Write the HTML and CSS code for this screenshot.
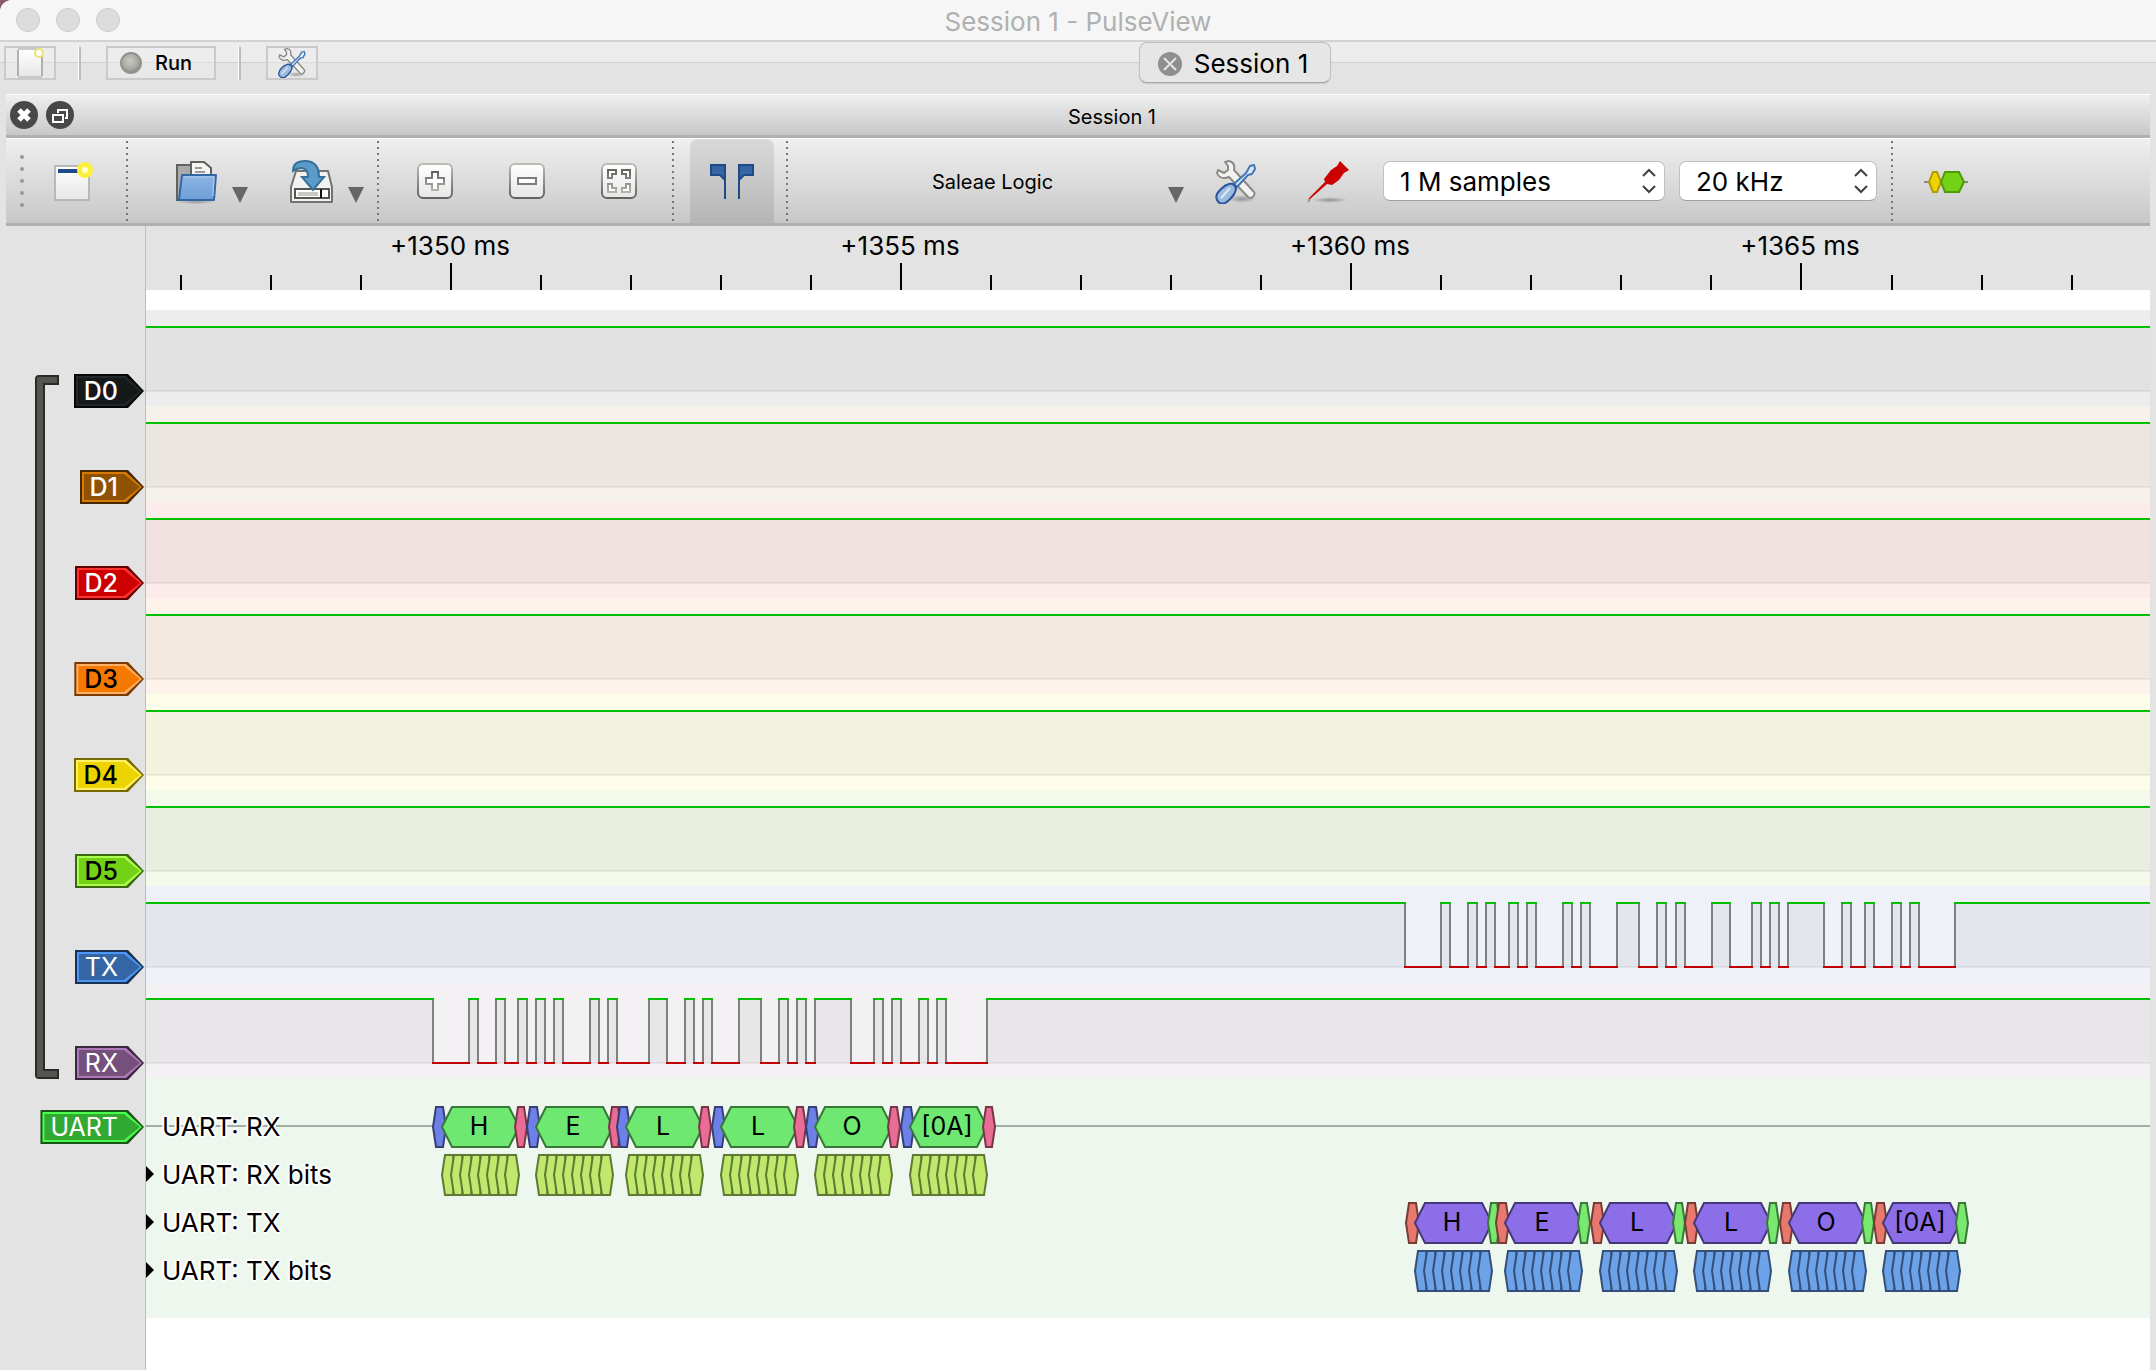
FILE: index.html
```html
<!DOCTYPE html>
<html lang="en">
<head>
	<meta charset="UTF-8">
	<title>Session 1 - PulseView</title>
	<link rel="stylesheet" href="styles.css">
</head>
<body>
	<svg class="defs" width="0" height="0" aria-hidden="true">
		<defs>
			<linearGradient id="paper" x1="0" y1="0" x2="0" y2="1"><stop offset="0" stop-color="#fff"/><stop offset="1" stop-color="#e6e6e6"/></linearGradient>
			<linearGradient id="folder" x1="0" y1="0" x2="0" y2="1"><stop offset="0" stop-color="#8db4e2"/><stop offset="1" stop-color="#6d9fd8"/></linearGradient>
			<linearGradient id="edge" x1="0" y1="0" x2="0" y2="1"><stop offset="0" stop-color="#bdbdb6"/><stop offset="1" stop-color="#63635e"/></linearGradient>
			<linearGradient id="glyph" x1="0" y1="0" x2="0" y2="1"><stop offset="0" stop-color="#62625e"/><stop offset="1" stop-color="#b4b4ae"/></linearGradient>
			<radialGradient id="bulb" cx=".45" cy=".4" r=".6"><stop offset="0" stop-color="#c8cbc2"/><stop offset=".7" stop-color="#a5a8a0"/><stop offset="1" stop-color="#7f827a"/></radialGradient>
			<radialGradient id="shade"><stop offset="0" stop-opacity=".3"/><stop offset="1" stop-opacity="0"/></radialGradient>
			<symbol id="tools" viewBox="0 0 44 44">
				<ellipse cx="28" cy="39" rx="14" ry="4" fill="url(#shade)"/>
				<path d="M11 2l4-1c4 1 6 4 5 9l20 22c2 3-3 8-6 5L15 17c-5 2-10 1-12-4l1-3 6 3 4-3 0-4z" fill="#f2f2f0" stroke="#8b8b86" stroke-width="2" stroke-linejoin="round"/>
				<path d="M36 6l4-1 1 4-3 5-4 1-11 12-3-3 12-11z" fill="#dce8f6" stroke="#4276b6" stroke-width="2" stroke-linejoin="round"/>
				<path d="M15 24q6-1 7 5-1 6-8 12c-4 4-9 3-11-1-2-5 1-8 4-11q4-4 8-5z" fill="#9dbbdd" stroke="#2a559a" stroke-width="2"/>
				<path d="M16 28L7 38" stroke="#dde9f5" stroke-width="2"/>
			</symbol>
			<symbol id="arrow" viewBox="0 0 16 16"><path d="M0 0h16L8 16z" fill="#666"/></symbol>
		</defs>
	</svg>

	<div class="window">
		<div class="titlebar">
			<div class="lights">
				<span class="light"></span>
				<span class="light"></span>
				<span class="light"></span>
			</div>
			<h1 class="window-title">Session 1 - PulseView</h1>
		</div>

		<div class="mainbar">
			<div class="main-tools">
				<button class="small-btn" aria-label="New session">
					<svg width="28" height="30" viewBox="0 0 28 30">
						<path d="M2 2h24v27H2z" fill="url(#paper)"/>
						<path d="M2 2v26M26 3v25" stroke="#b0b0ac" stroke-width="2"/>
						<path d="M2 1h20M2 29h24" stroke="#c8c8c4" stroke-width="2"/>
						<circle cx="23" cy="5" r="4" fill="#fff" stroke="#eee276" stroke-width="2"/>
					</svg>
				</button>
				<span class="small-sep"></span>
				<button class="small-btn run">
					<svg width="24" height="24" viewBox="0 0 24 24"><circle cx="12" cy="12" r="10" fill="url(#bulb)" stroke="#90938b" stroke-width="2"/></svg>
					Run
				</button>
				<span class="small-sep"></span>
				<button class="small-btn" aria-label="Settings"><svg width="30" height="30"><use href="#tools"/></svg></button>
			</div>
			<div class="tabs">
				<button class="tab">
					<svg width="24" height="24" viewBox="0 0 24 24"><circle cx="12" cy="12" r="12" fill="#8f8f8f"/><path d="M6 6l12 12M18 6L6 18" stroke="#e4e4e4" stroke-width="2"/></svg>
					Session 1
				</button>
			</div>
		</div>

		<div class="dock">
			<div class="dock-title">
				<div class="dock-buttons">
					<button class="dock-btn" aria-label="Close"><svg width="28" height="28" viewBox="0 0 28 28"><circle cx="14" cy="14" r="14" fill="#484848"/><path d="M9 9l10 10M19 9L9 19" stroke="#fff" stroke-width="5"/></svg></button>
					<button class="dock-btn" aria-label="Float"><svg width="28" height="28" viewBox="0 0 28 28"><circle cx="14" cy="14" r="14" fill="#484848"/><path d="M7 14h10v7H7zM12 12V9h9v8h-2" fill="none" stroke="#fff" stroke-width="2"/></svg></button>
				</div>
				<h2 class="dock-name">Session 1</h2>
			</div>

			<div class="toolbar">
				<div class="handle"><i></i><i></i><i></i><i></i><i></i></div>
				<button class="tool" aria-label="New view">
					<svg width="44" height="44" viewBox="0 0 44 44">
						<path d="M4 6h34v34H4z" fill="url(#paper)" stroke="#b9b9b3" stroke-width="2"/>
						<path d="M7 9h22v4H7z" fill="#204a87"/>
						<circle cx="34" cy="10" r="8" fill="#fcf03c"/>
						<circle cx="34" cy="10" r="3" fill="#fffdd8"/>
					</svg>
				</button>
				<span class="sep"></span>
				<button class="split" aria-label="Open">
					<svg width="44" height="44" viewBox="0 0 44 44">
						<ellipse cx="22" cy="42" rx="20" ry="2" fill="url(#shade)"/>
						<path d="M3 40V5h15v35z" fill="#aaa" stroke="#61615d" stroke-width="2"/>
						<path d="M17 24V2h13l7 6v16z" fill="#f4f4f2" stroke="#61615d" stroke-width="2"/>
						<path d="M21 8h7M21 12h10" stroke="#9a9a96" stroke-width="2"/>
						<path d="M8 15h34l-2 25H5z" fill="url(#folder)" stroke="#3465a4" stroke-width="2" stroke-linejoin="round"/>
						<path d="M10 17h30l-1 19" fill="none" stroke="#b6d0ee"/>
					</svg>
					<svg class="arrow" width="16" height="16"><use href="#arrow"/></svg>
				</button>
				<button class="split" aria-label="Save">
					<svg width="44" height="44" viewBox="0 0 44 44">
						<path d="M6 11h32l4 16v15H1V27z" fill="#f1f1ef" stroke="#73736e" stroke-width="2" stroke-linejoin="round"/>
						<path d="M5 29h34v9H5z" fill="#fff" stroke="#555" stroke-width="2"/>
						<path d="M8 32h20v4H8z" fill="#c8c8c4"/>
						<path d="M31 29v9" stroke="#111" stroke-width="2"/>
						<path d="M3 11C3 4 8 1 15 1c9 0 14 5 14 16h5L23 30 12 17h6c0-7-3-9-7-9-3 0-5 1-8 3z" fill="#5c9ac8" stroke="#356f9c" stroke-width="2"/>
					</svg>
					<svg class="arrow" width="16" height="16"><use href="#arrow"/></svg>
				</button>
				<span class="sep wide"></span>
				<button class="tool" aria-label="Zoom in">
					<svg width="38" height="40" viewBox="0 0 38 40">
						<rect x="2" y="2" width="34" height="34" rx="5" fill="url(#paper)" stroke="url(#edge)" stroke-width="2"/>
						<path d="M16 10h6v6h6v6h-6v6h-6v-6h-6v-6h6z" fill="#fff" stroke="url(#glyph)" stroke-width="2"/>
					</svg>
				</button>
				<button class="tool" aria-label="Zoom out">
					<svg width="38" height="40" viewBox="0 0 38 40">
						<rect x="2" y="2" width="34" height="34" rx="5" fill="url(#paper)" stroke="url(#edge)" stroke-width="2"/>
						<path d="M10 16h18v6H10z" fill="#fff" stroke="#7d7d78" stroke-width="2"/>
					</svg>
				</button>
				<button class="tool" aria-label="Zoom to fit">
					<svg width="38" height="40" viewBox="0 0 38 40">
						<rect x="2" y="2" width="34" height="34" rx="5" fill="url(#paper)" stroke="url(#edge)" stroke-width="2"/>
						<path d="M8 8h8v4h-4v4H8zM30 8h-8v4h4v4h4zM8 30h8v-4h-4v-4H8zM30 30h-8v-4h4v-4h4z" fill="#fff" stroke="url(#glyph)" stroke-width="2"/>
					</svg>
				</button>
				<span class="sep"></span>
				<button class="tool pressed" aria-label="Show cursors" aria-pressed="true">
					<svg width="44" height="36" viewBox="0 0 44 36">
						<path d="M1 1h14v34V16l-5-5H1zM43 1H29v34V16l5-5h9z" fill="#3465a4" stroke="#204a87" stroke-width="2"/>
					</svg>
				</button>
				<span class="sep"></span>
				<button class="device">
					<span class="device-name">Saleae Logic</span>
					<svg class="arrow" width="16" height="16"><use href="#arrow"/></svg>
				</button>
				<button class="tool" aria-label="Configure device"><svg width="44" height="44"><use href="#tools"/></svg></button>
				<button class="tool" aria-label="Configure channels">
					<svg width="44" height="44" viewBox="0 0 44 44">
						<ellipse cx="24" cy="40" rx="18" ry="3" fill="url(#shade)"/>
						<path d="M2 42l1-4 16-16-1-3 7-9 6-4 3-5 9 9-5 3-5 7-7 5-5-1L4 39z" fill="#c00"/>
						<path d="M2 42l2-3" stroke="#999" stroke-width="2"/>
					</svg>
				</button>
				<div class="combos">
					<label class="combo samples">
						<select aria-label="Sample count"><option>1 M samples</option></select>
						<svg width="16" height="26" viewBox="0 0 16 26"><path d="M2 8l6-6 6 6M2 18l6 6 6-6" fill="none" stroke="#404040" stroke-width="2"/></svg>
					</label>
					<label class="combo rate">
						<select aria-label="Sample rate"><option>20 kHz</option></select>
						<svg width="16" height="26" viewBox="0 0 16 26"><path d="M2 8l6-6 6 6M2 18l6 6 6-6" fill="none" stroke="#404040" stroke-width="2"/></svg>
					</label>
				</div>
				<span class="sep"></span>
				<button class="tool" aria-label="Add decoder">
					<svg width="44" height="24" viewBox="0 0 44 24">
						<path d="M0 12h44" stroke="#888" stroke-width="2"/>
						<path d="M5 12L9 2h4l4 10-4 10H9z" fill="#edd400" stroke="#b39a00" stroke-width="2"/>
						<path d="M17 12l4-10h14l5 10-5 10H21z" fill="#73d216" stroke="#4e9a06" stroke-width="2"/>
					</svg>
				</button>
			</div>

			<div class="view">
				<div class="headers">
					<div class="group">
						<div class="bracket"><div class="bracket-fill"><div class="bracket-edge"></div></div></div>
						<div class="tags">
							<div class="tag-row"><span class="tag d0">D0</span></div>
							<div class="tag-row"><span class="tag d1">D1</span></div>
							<div class="tag-row"><span class="tag d2">D2</span></div>
							<div class="tag-row"><span class="tag d3">D3</span></div>
							<div class="tag-row"><span class="tag d4">D4</span></div>
							<div class="tag-row"><span class="tag d5">D5</span></div>
							<div class="tag-row"><span class="tag tx">TX</span></div>
							<div class="tag-row"><span class="tag rx">RX</span></div>
						</div>
					</div>
					<div class="tag-row decoder-tag"><span class="tag uart">UART</span></div>
				</div>
				<div class="traces">
					<svg class="ruler" id="ruler"></svg>
					<div class="signals">
						<svg class="signal d0-bg" data-name="D0"></svg>
						<svg class="signal d1-bg" data-name="D1"></svg>
						<svg class="signal d2-bg" data-name="D2"></svg>
						<svg class="signal d3-bg" data-name="D3"></svg>
						<svg class="signal d4-bg" data-name="D4"></svg>
						<svg class="signal d5-bg" data-name="D5"></svg>
						<svg class="signal tx-bg" data-name="TX"></svg>
						<svg class="signal rx-bg" data-name="RX"></svg>
					</div>
					<div class="decoder">
						<div class="ann-row first"><svg class="anns" id="rxData"></svg><span class="ann-label">UART: RX</span></div>
						<div class="ann-row"><svg class="anns" id="rxBits"></svg><span class="ann-label">UART: RX bits</span></div>
						<div class="ann-row"><svg class="anns" id="txData"></svg><span class="ann-label">UART: TX</span></div>
						<div class="ann-row"><svg class="anns" id="txBits"></svg><span class="ann-label">UART: TX bits</span></div>
					</div>
				</div>
			</div>
		</div>
	</div>
	<script src="script.js"></script>
</body>
</html>
```
FILE: styles.css
```css
* {
	box-sizing: border-box;
}
html {
	background: #8a5a6c;
}
body {
	margin: 0;
	font-family: Inter, "Liberation Sans", sans-serif;
	font-size: 26px;
	color: #000;
}
h1,
h2 {
	margin: 0;
	font-weight: 400;
}
button {
	margin: 0;
	padding: 0;
	border: 0;
	background: none;
	font: inherit;
	color: inherit;
}
svg {
	display: block;
	flex: none;
}
.defs {
	position: absolute;
}
.window {
	display: flex;
	flex-direction: column;
	min-height: 100vh;
	border-radius: 12px 0 0 0;
	background: #e3e3e3;
	overflow: hidden;
}

/* title bar */
.titlebar {
	display: grid;
	grid-template-columns: 1fr auto 1fr;
	align-items: center;
	height: 42px;
	padding-left: 16px;
	padding-right: 16px;
	border-bottom: 2px solid #d2d2d2;
	background: #f6f6f6;
}
.lights {
	display: flex;
	gap: 16px;
}
.light {
	width: 24px;
	height: 24px;
	border: 1px solid #c9c9c9;
	border-radius: 50%;
	background: #dcdcdc;
}
.window-title {
	padding-top: 2px;
	font-size: 26px;
	color: #b0b0b0;
}

/* main bar with the session tabs */
.mainbar {
	display: flex;
	height: 52px;
	padding-left: 4px;
	padding-right: 4px;
	background: linear-gradient(#ececec 20px, #d0d0d0 20px, #d0d0d0 21px, #e3e3e3 21px);
}
.main-tools {
	display: flex;
	align-items: center;
	height: 34px;
	margin-top: 4px;
}
.small-btn {
	display: flex;
	align-items: center;
	justify-content: center;
	width: 52px;
	height: 34px;
	border: 2px solid #cacaca;
	background: rgba(240, 240, 240, .4);
}
.small-btn.run {
	justify-content: flex-start;
	gap: 12px;
	width: 110px;
	padding-left: 11px;
	font-size: 20px;
	font-weight: 500;
}
.small-sep {
	width: 3px;
	height: 33px;
	margin: 0 25px 0 22px;
	border-left: 1px solid #fff;
	border-right: 2px solid #bcbcbc;
}
.tabs {
	display: flex;
	flex: 1;
	justify-content: center;
	align-items: flex-start;
}
.tab {
	display: flex;
	align-items: center;
	gap: 12px;
	height: 41px;
	padding: 2px 22px 0 18px;
	border: 1px solid #c0c0c0;
	border-bottom-color: #a8a8a8;
	border-radius: 8px;
	background: #e6e6e6;
	box-shadow: 0 1px 1px rgba(0, 0, 0, .12);
}

/* dock */
.dock {
	display: flex;
	flex-direction: column;
	flex: 1;
	margin: 0 6px;
}
.dock-title {
	display: flex;
	align-items: center;
	height: 44px;
	border-top: 1px solid #fff;
	border-bottom: 3px solid #b0b0b0;
	background: linear-gradient(#efefef, #c8c8c8);
}
.dock-buttons {
	display: flex;
	gap: 8px;
	padding-left: 4px;
}
.dock-name {
	flex: 1;
	padding-top: 4px;
	font-size: 20px;
	text-align: center;
}
.toolbar {
	display: flex;
	align-items: center;
	height: 88px;
	border-top: 1px solid #fff;
	border-bottom: 3px solid #b0b0b0;
	background: linear-gradient(#efefef, #c8c8c8);
}
.handle {
	display: flex;
	flex-direction: column;
	align-items: flex-end;
	gap: 8px;
	width: 21px;
	padding-right: 3px;
}
.handle i {
	width: 4px;
	height: 4px;
	border-radius: 50%;
	background: #999;
}
.tool {
	display: flex;
	align-items: center;
	justify-content: center;
	width: 92px;
	height: 84px;
	padding-top: 2px;
}
.tool.pressed {
	width: 84px;
	margin: 0 5px 0 9px;
	border-radius: 8px 8px 0 0;
	background: rgba(0, 0, 0, .09);
}
.sep {
	width: 16px;
	height: 80px;
	background: repeating-linear-gradient(#777 0, #777 2px, transparent 2px, transparent 6px) center / 2px 100% no-repeat;
}
.sep.wide {
	width: 22px;
}
.split {
	display: flex;
	align-items: center;
	gap: 14px;
	height: 84px;
	padding: 2px 3px 0 39px;
}
.arrow {
	margin-top: 26px;
}
.device {
	display: flex;
	align-items: center;
	width: 395px;
	height: 84px;
	padding: 2px 6px 0 22px;
	font-size: 20px;
}
.device-name {
	flex: 1;
}
.combos {
	display: flex;
	gap: 14px;
	padding: 0 7px 0 9px;
}
.combo {
	position: relative;
	display: block;
}
.combo.samples {
	width: 282px;
}
.combo.rate {
	width: 198px;
}
.combo select {
	display: block;
	width: 100%;
	height: 40px;
	padding: 0 16px;
	border: 1px solid #c0c0c0;
	border-bottom-color: #a0a0a0;
	border-radius: 7px;
	background: #fff;
	appearance: none;
	font: inherit;
	color: #000;
}
.combo svg {
	position: absolute;
	top: 7px;
	right: 8px;
	pointer-events: none;
}

/* channel tags */
.view {
	display: flex;
	flex: 1;
}
.headers {
	width: 140px;
	padding: 117px 1px 0 0;
	border-right: 1px solid #bebebe;
}
.group {
	display: flex;
	justify-content: space-between;
	padding-left: 29px;
}
.tags {
	flex: 1;
}
.tag-row {
	display: flex;
	align-items: center;
	justify-content: flex-end;
	height: 96px;
}
.decoder-tag {
	height: 32px;
}
.bracket {
	width: 24px;
	margin: 32px 0;
	border: 2px solid #2a2b28;
	border-right: 0;
	border-radius: 4px 0 0 4px;
	background: #2a2b28;
}
.bracket-fill {
	height: 100%;
	margin-right: 2px;
	padding: 6px 0 6px 6px;
	background: #555650;
}
.bracket-edge {
	height: 100%;
	margin-right: -2px;
	border: 2px solid #2a2b28;
	border-right: 0;
	background: #e3e3e3;
}
.tag {
	position: relative;
	isolation: isolate;
	height: 34px;
	padding: 0 26px 0 10px;
	background: var(--edge);
	font-size: 25px;
	line-height: 35px;
	color: #fff;
	font-weight: 500;
}
.tag,
.tag::before,
.tag::after {
	clip-path: polygon(0 0, calc(100% - 16px) 0, 100% 50%, calc(100% - 16px) 100%, 0 100%);
}
.tag::before,
.tag::after {
	content: '';
	position: absolute;
	z-index: -1;
	inset: 2px;
	background: var(--light);
}
.tag::after {
	inset: 4px;
	background: var(--fill);
}
.d0 { --fill: #16191a; --light: #22272a; --edge: #060808; }
.d1 { --fill: #8f5202; --light: #d67b03; --edge: #472901; }
.d2 { --fill: #cc0000; --light: #ff3232; --edge: #660000; }
.d3 { --fill: #f57900; --light: #ffb066; --edge: #7a3c00; }
.d4 { --fill: #edd400; --light: #fff066; --edge: #766a00; }
.d5 { --fill: #73d216; --light: #acff50; --edge: #39690b; }
.tx { --fill: #3465a4; --light: #4e97f6; --edge: #1a3252; }
.rx { --fill: #75507b; --light: #af78b8; --edge: #3a283d; }
.uart { --fill: #32a932; --light: #4bfe4b; --edge: #195419; }
.d3,
.d4,
.d5 {
	color: #000;
}
.tx,
.rx,
.uart {
	font-weight: 400;
}

/* traces */
.traces {
	flex: 1;
	min-width: 0;
	background: #fff;
}
.ruler {
	width: 100%;
	height: 64px;
	background: #e3e3e3;
}
.ruler path {
	stroke: #000;
	stroke-width: 2px;
}
.ruler text,
.anns text {
	text-anchor: middle;
}
.anns text {
	font-size: 25px;
}
.signals {
	padding-top: 20px;
}
.signal {
	width: 100%;
	height: 96px;
}
.d0-bg { background: #ededed; }
.d1-bg { background: #f6f1ea; }
.d2-bg { background: #fbebeb; }
.d3-bg { background: #fef3ea; }
.d4-bg { background: #fdfdea; }
.d5-bg { background: #f3faea; }
.tx-bg { background: #eef2f8; }
.rx-bg { background: #f4f1f4; }
.base { fill: rgba(0, 0, 0, .05); }
.level { fill: rgba(0, 0, 0, .045); }
.edges,
.high,
.low {
	fill: none;
	stroke: #808080;
	stroke-width: 2px;
}
.high { stroke: #00c000; }
.low { stroke: #c00000; }

/* decoder rows */
.decoder {
	padding: 24px 0;
	background: #eef7ee;
}
.ann-row {
	position: relative;
	display: flex;
	align-items: center;
	height: 48px;
	padding-left: 16px;
}
.ann-row::before {
	content: '';
	position: absolute;
	left: 0;
	border: 8px solid transparent;
	border-left-color: #000;
	border-right: 0;
}
.ann-row.first {
	background: linear-gradient(#a5aea6, #a5aea6) 0 23px / 100% 2px no-repeat;
}
.ann-row.first::before {
	content: none;
}
.anns {
	position: absolute;
	top: 0;
	left: 0;
	width: 100%;
	height: 48px;
}
.ann-label {
	position: relative;
	text-shadow: 1px 1px #fff, -1px 1px #fff, 1px -1px #fff, -1px -1px #fff, 2px 0 #fff, -2px 0 #fff, 0 2px #fff, 0 -2px #fff;
}
.ann {
	stroke-width: 2px;
}
.rx-start { fill: #6c80e8; stroke: #364078; }
.rx-data { fill: #6ee870; stroke: #387838; }
.rx-stop { fill: #e86c94; stroke: #783648; }
.rx-bit { fill: #c0e86c; stroke: #5f7a32; }
.tx-start { fill: #e8786e; stroke: #783c36; }
.tx-data { fill: #8c6ee8; stroke: #463778; }
.tx-stop { fill: #78e86e; stroke: #3c783a; }
.tx-bit { fill: #6ca2e8; stroke: #34507a; }
```
FILE: script.js
```js
(function() {
	var HIGH = 17, LOW = 81;
	var chars = ['H', 'E', 'L', 'L', 'O', '[0A]'];
	// x of every level change, each line idles high
	var changes = {
		TX: [1259, 1295, 1304, 1322, 1331, 1340, 1349, 1363, 1372, 1381, 1390, 1417, 1426, 1435, 1444, 1471, 1493, 1511, 1520,
			1530, 1539, 1566, 1584, 1606, 1615, 1624, 1633, 1642, 1678, 1696, 1705, 1719, 1728, 1746, 1755, 1764, 1773, 1809],
		RX: [287, 323, 332, 350, 359, 372, 381, 390, 399, 408, 417, 444, 453, 462, 471, 503, 521, 539, 548,
			557, 566, 593, 615, 633, 642, 651, 660, 669, 705, 728, 737, 746, 755, 773, 782, 791, 800, 841]
	};
	var frames = {
		rx: [287, 381, 471, 566, 660, 755],
		tx: [1260, 1350, 1445, 1539, 1634, 1728]
	};

	function drawSignal(svg) {
		var width = svg.getBoundingClientRect().width;
		var xs = [-2].concat(changes[svg.dataset.name] || [], [width + 2]);
		var high = '', low = '', edges = '', level = '';
		for (var i = 0; i < xs.length - 1; i++) {
			var a = xs[i], b = xs[i + 1];
			if (i % 2 === 0) {
				high += `M${a - 1} ${HIGH}H${b + 1}`;
				level += `M${a} ${HIGH}H${b}V${LOW}H${a}z`;
			} else {
				low += `M${a - 1} ${LOW}H${b + 1}`;
			}
			edges += `M${b} ${HIGH}V${LOW}`;
		}
		svg.innerHTML = `<rect class="base" y="80" width="100%" height="2"/><path class="level" d="${level}"/>
			<path class="edges" d="${edges}"/><path class="high" d="${high}"/><path class="low" d="${low}"/>`;
	}

	function hexagon(cls, a, b, slant) {
		return `<path class="ann ${cls}" d="M${a} 25L${a + slant} 5H${b - slant}L${b} 25L${b - slant} 45H${a + slant}z"/>`;
	}

	function drawFrames(name) {
		var data = '', bits = '';
		frames[name].forEach(function(x, i) {
			data += hexagon(name + '-start', x, x + 13, 3);
			data += hexagon(name + '-data', x + 9, x + 86, 10);
			data += hexagon(name + '-stop', x + 82, x + 94, 3);
			data += `<text x="${x + 46}" y="33">${chars[i]}</text>`;
			for (var n = 0; n < 8; n++) {
				bits += hexagon(name + '-bit', x + 9 + n * 9, x + 23 + n * 9, 3);
			}
		});
		document.querySelector('#' + name + 'Data').innerHTML = data;
		document.querySelector('#' + name + 'Bits').innerHTML = bits;
	}

	function drawRuler() {
		var svg = document.querySelector('#ruler');
		var width = svg.getBoundingClientRect().width;
		var html = '';
		for (var k = 0; 35 + k * 90 < width; k++) {
			var x = Math.round(34.6 + k * 90.05);
			var major = k % 5 === 3;
			html += `<path d="M${x} ${major ? 37 : 49}V64"/>`;
			if (major) {
				html += `<text x="${x - 1}" y="29">+${1347 + k} ms</text>`;
			}
		}
		svg.innerHTML = html;
	}

	function draw() {
		drawRuler();
		document.querySelectorAll('.signal').forEach(drawSignal);
	}

	drawFrames('rx');
	drawFrames('tx');
	draw();
	window.addEventListener('resize', draw);
})();
```
